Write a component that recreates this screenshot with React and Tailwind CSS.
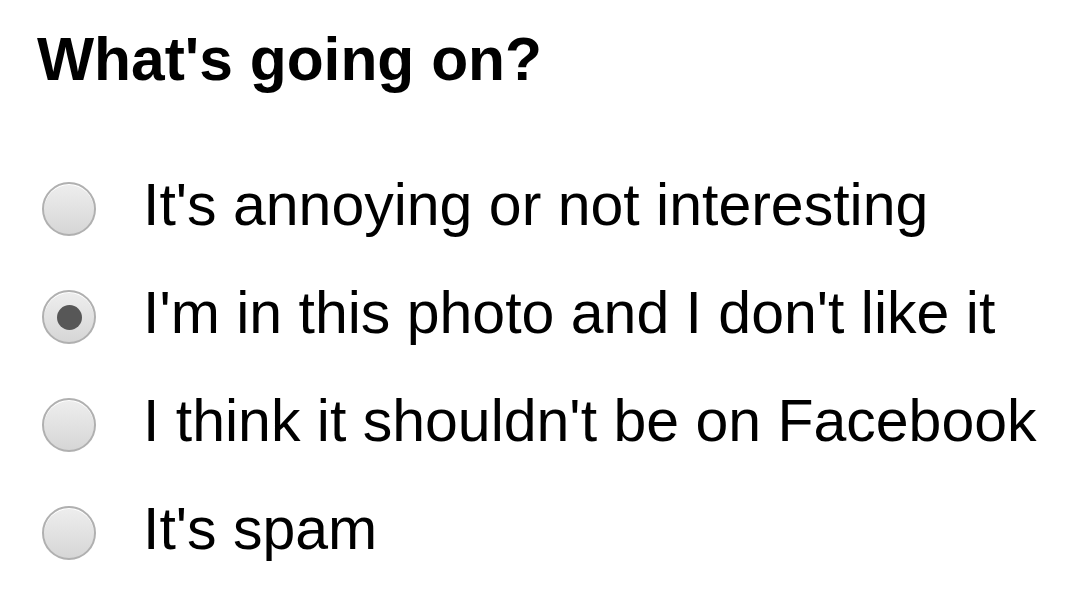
import React, { useState } from 'react';

const options = [
  "It's annoying or not interesting",
  "I'm in this photo and I don't like it",
  "I think it shouldn't be on Facebook",
  "It's spam",
];

const Radio = ({ checked }) => (
  <span className="ml-[5px] flex h-[54px] w-[54px] shrink-0 items-center justify-center rounded-full border-2 border-[#b0b0b0] bg-gradient-to-b from-[#eeeeee] to-[#d6d6d6] shadow-[inset_0_1px_0_#ffffff]">
    {checked && <span className="h-[25px] w-[25px] rounded-full bg-[#575757]" />}
  </span>
);

const App = () => {
  const [selected, setSelected] = useState(1);

  return (
    <div
      className="min-h-[600px] bg-white px-[37px] text-black"
      style={{ fontFamily: '"Liberation Sans", Arial, sans-serif' }}
    >
      <h1 className="pt-[29px] text-[60.5px] font-bold leading-[60px]">What's going on?</h1>

      <ul className="mt-[66px]">
        {options.map((label, i) => (
          <li
            key={label}
            onClick={() => setSelected(i)}
            className="flex h-[108px] cursor-pointer items-center gap-[47px]"
          >
            <Radio checked={selected === i} />
            <span className="mb-[8px] whitespace-nowrap text-[59px] leading-none">{label}</span>
          </li>
        ))}
      </ul>
    </div>
  );
};

export default App;
